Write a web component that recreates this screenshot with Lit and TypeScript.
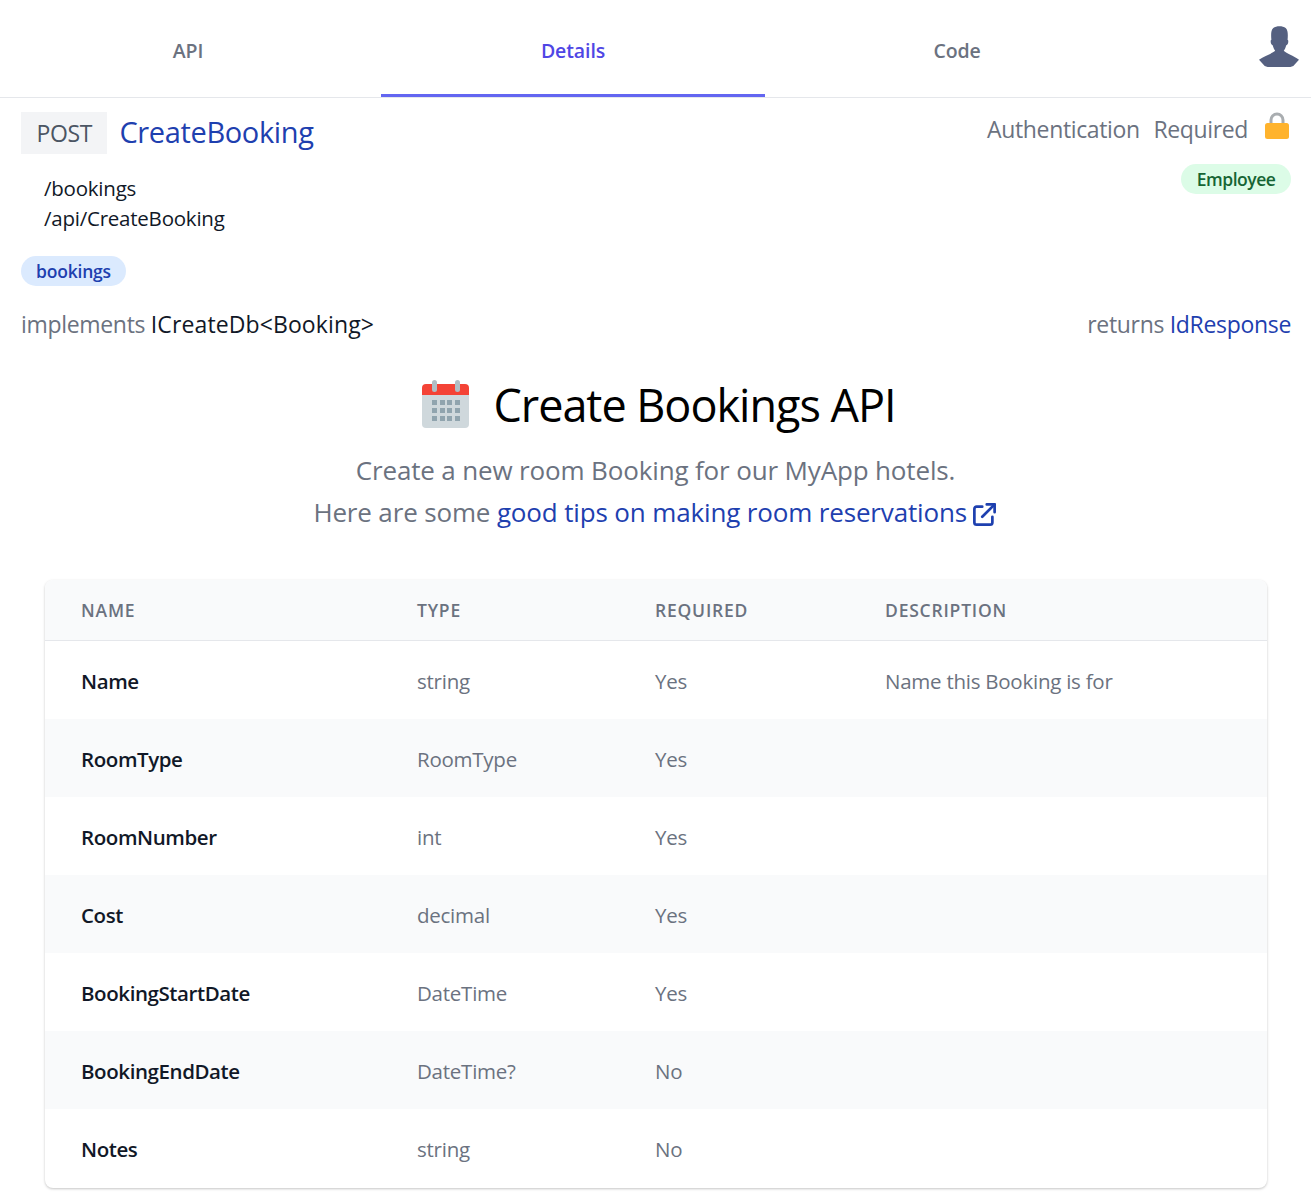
import { LitElement, html, svg, css } from 'lit';
import { customElement } from 'lit/decorators.js';

const fields = [
  { name: 'Name', type: 'string', required: 'Yes', description: 'Name this Booking is for' },
  { name: 'RoomType', type: 'RoomType', required: 'Yes', description: '' },
  { name: 'RoomNumber', type: 'int', required: 'Yes', description: '' },
  { name: 'Cost', type: 'decimal', required: 'Yes', description: '' },
  { name: 'BookingStartDate', type: 'DateTime', required: 'Yes', description: '' },
  { name: 'BookingEndDate', type: 'DateTime?', required: 'No', description: '' },
  { name: 'Notes', type: 'string', required: 'No', description: '' },
];

@customElement('app-root')
export class AppRoot extends LitElement {
  static styles = css`
    :host {
      display: block;
      height: 1203px;
      overflow: hidden;
      background: #fff;
      font-family: 'Open Sans', 'Noto Sans', sans-serif;
      color: #111827;
    }

    a { color: #1e40af; text-decoration: none; }

    /* ---- tabs ---- */
    .tabs {
      display: flex;
      height: 97px;
      border-bottom: 1px solid #e5e7eb;
    }
    .tab {
      height: 97px;
      box-sizing: border-box;
      display: flex;
      align-items: center;
      justify-content: center;
      padding-top: 4px;
      font-size: 19.5px;
      font-weight: 600;
      letter-spacing: -0.1px;
      color: #6b7280;
      width: 384px;
    }
    .tab.first { width: 381px; padding-right: 5px; }
    .tab.active {
      color: #4f46e5;
      border-bottom: 3px solid #6366f1;
      padding-top: 7px;
    }
    .avatar {
      margin-left: auto;
      box-sizing: border-box;
      width: 68px;
      height: 72px;
      margin-top: 12px;
      padding: 14px 0 0 4px;
      display: flex;
      justify-content: center;
    }

    /* ---- heading block ---- */
    .head {
      display: flex;
      justify-content: space-between;
      padding: 14px 20px 0 21px;
    }
    .title { display: flex; align-items: center; align-self: flex-start; gap: 12px; }
    .verb {
      background: #f3f4f6;
      color: #4b5563;
      font-size: 23px;
      letter-spacing: -0.4px;
      line-height: 42px;
      height: 42px;
      padding: 0 15.5px;
    }
    .title a { font-size: 29px; letter-spacing: -0.36px; line-height: 42px; position: relative; top: -1px; }
    .auth {
      display: flex;
      flex-direction: column;
      align-items: flex-end;
    }
    .auth-line {
      display: flex;
      align-items: center;
      gap: 17px;
      font-size: 23px;
      letter-spacing: -0.36px;
      color: #6b7280;
      height: 36px;
      word-spacing: 8px;
      margin-top: -1px;
    }
    .auth-line svg { margin-right: 2px; margin-top: -8px; }
    .pill {
      display: inline-flex;
      align-items: center;
      height: 30px;
      padding: 0 15px;
      border-radius: 15px;
      font-size: 17.5px;
      font-weight: 600;
      letter-spacing: -0.2px;
    }
    .pill.role { background: #dcfce7; color: #166534; margin-top: 17px; padding: 0 15.5px; letter-spacing: -0.45px; }
    .pill.tag { background: #dbeafe; color: #1e40af; }

    .paths {
      padding: 0 0 0 44px;
      margin-top: -21px;
      font-size: 20.5px;
      letter-spacing: -0.23px;
      line-height: 30px;
      color: #111827;
    }
    .tags { padding: 23px 21px 0; display: flex; }

    .impl {
      display: flex;
      justify-content: space-between;
      padding: 22px 20px 0 21px;
      font-size: 23px;
      letter-spacing: -0.32px;
      line-height: 32px;
      color: #6b7280;
    }
    .impl .dark { color: #111827; letter-spacing: 0.11px; }

    /* ---- description ---- */
    .hero { text-align: center; padding-top: 35px; }
    h1 {
      margin: 0;
      display: flex;
      justify-content: center;
      align-items: center;
      gap: 23px;
      font-size: 45px;
      font-weight: 400;
      letter-spacing: -1.02px;
      line-height: 60px;
      color: #000;
      padding-left: 5px;
    }
    .desc {
      margin-top: 14px;
      font-size: 26px;
      letter-spacing: -0.15px;
      line-height: 42px;
      color: #6b7280;
    }
    .desc svg { vertical-align: -6px; margin-left: -3px; }

    /* ---- fields table ---- */
    .card {
      margin: 47px 44px 0 45px;
      padding-bottom: 1px;
      border-radius: 8px;
      overflow: hidden;
      box-shadow: 0 1px 3px rgba(0, 0, 0, 0.18), 0 1px 2px rgba(0, 0, 0, 0.06);
    }
    table { width: 100%; border-collapse: collapse; table-layout: fixed; }
    th {
      background: #f9fafb;
      height: 60px;
      padding: 0 0 0 36px;
      text-align: left;
      font-size: 17.5px;
      font-weight: 600;
      letter-spacing: 0.8px;
      color: #6b7280;
      border-bottom: 1px solid #e5e7eb;
      box-sizing: content-box;
    }
    td {
      height: 76px;
      padding: 2px 0 0 36px;
      font-size: 20.5px;
      letter-spacing: -0.25px;
      color: #6b7280;
    }
    td.name { color: #111827; font-weight: 600; letter-spacing: -0.41px; }
    tr.alt td { background: #f9fafb; }
  `;

  render() {
    return html`
      <div class="tabs">
        <div class="tab first">API</div>
        <div class="tab active">Details</div>
        <div class="tab">Code</div>
        <div class="avatar">
          <svg width="40" height="42" viewBox="0 0 42 44">
            <path fill="#556080" d="M15 2c3-2.500 10-2.500 13 0 2.500 2 2.500 7 2 12.500 1 0 1 3 0 4.500l-1.500 1.500c-.5 2.500-1.500 4-2.500 5.500 3 3 10 5 16 9.500L36 42 33 43H9l-3-1-6-6.500C6 31 14 29 17 26c-1-1.500-2-3-2.500-5.500L13 19c-1-1.500-1-4.500 0-4.500-.5-5.500-.5-10.500 2-12.500z"/>
          </svg>
        </div>
      </div>

      <div class="head">
        <div class="title">
          <span class="verb">POST</span>
          <a href="#">CreateBooking</a>
        </div>
        <div class="auth">
          <div class="auth-line">
            <span>Authentication Required</span>
            <svg width="24" height="27" viewBox="0 0 24 27">
              <path fill="none" stroke="#a9adb0" stroke-width="3" d="M6 13V8a6 6 0 0 1 12 0v5"/>
              <rect y="11" x="0" width="24" height="16" rx="2.500" fill="#ffb32d"/>
            </svg>
          </div>
          <span class="pill role">Employee</span>
        </div>
      </div>

      <div class="paths">
        <div>/bookings</div>
        <div>/api/CreateBooking</div>
      </div>

      <div class="tags"><span class="pill tag">bookings</span></div>

      <div class="impl">
        <div>implements <span class="dark">ICreateDb&lt;Booking&gt;</span></div>
        <div>returns <a href="#">IdResponse</a></div>
      </div>

      <div class="hero">
        <h1>
          <svg width="50" height="50" viewBox="0 0 50 50">
            <path fill="#cfd8dc" d="M2 8h47v36a4 4 0 0 1-4 4H6a4 4 0 0 1-4-4z"/>
            <path fill="#f44336" d="M6 4h39a4 4 0 0 1 4 4v7H2V8a4 4 0 0 1 4-4z"/>
            <g fill="#b0bec5">
              <rect x="12" y="0" width="5" height="12" rx="2.500"/>
              <rect x="35" y="0" width="5" height="12" rx="2.500"/>
            </g>
            <g fill="#90a4ae">
              ${[20, 28, 36].map(y => [12, 20, 27, 35].map(x => svg`<rect x=${x} y=${y} width="5" height="5"/>`))}
            </g>
          </svg>
          <span>Create Bookings API</span>
        </h1>
        <div class="desc">
          <div>Create a new room Booking for our MyApp hotels.</div>
          <div>Here are some <a href="#">good tips on making room reservations
            <svg width="27" height="27" viewBox="0 0 24 24" fill="none" stroke="#1e40af" stroke-width="2.400" stroke-linecap="round" stroke-linejoin="round">
              <path d="M10 5H5a2 2 0 0 0-2 2v12a2 2 0 0 0 2 2h12a2 2 0 0 0 2-2v-5"/>
              <path d="M14 3h7v7"/>
              <path d="M21 3 10 14"/>
            </svg></a></div>
        </div>
      </div>

      <div class="card">
        <table>
          <colgroup>
            <col style="width:336px" /><col style="width:238px" /><col style="width:230px" /><col />
          </colgroup>
          <thead>
            <tr><th>NAME</th><th>TYPE</th><th>REQUIRED</th><th>DESCRIPTION</th></tr>
          </thead>
          <tbody>
            ${fields.map((f, i) => html`
              <tr class=${i % 2 ? 'alt' : ''}>
                <td class="name">${f.name}</td>
                <td>${f.type}</td>
                <td>${f.required}</td>
                <td>${f.description}</td>
              </tr>`)}
          </tbody>
        </table>
      </div>
    `;
  }
}
